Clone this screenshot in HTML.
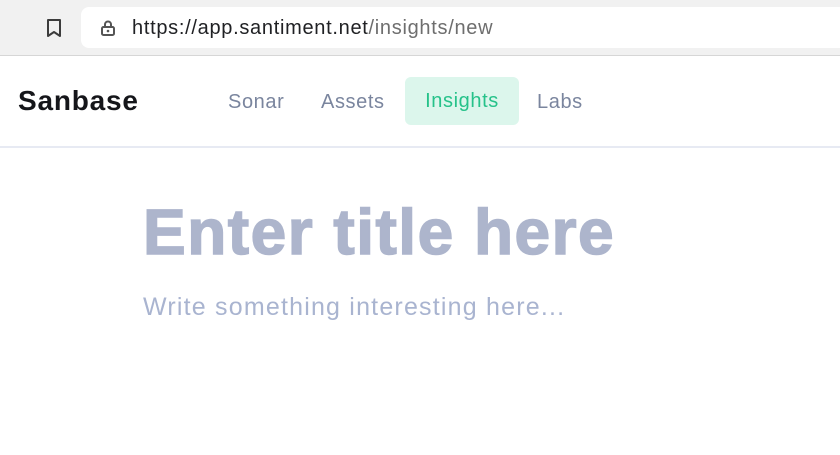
<!DOCTYPE html>
<html><head><style>
body{margin:0;width:840px;height:455px;overflow:hidden;background:#fff;font-family:"Liberation Sans",sans-serif;position:relative}
.bar{position:absolute;left:0;top:0;width:840px;height:55px;background:#f1f1f1;border-bottom:1px solid #d6d6d6}
.url{position:absolute;left:81px;top:7px;width:780px;height:41px;background:#fff;border-radius:8px}
.urltxt{position:absolute;left:132px;top:17px;font-size:20px;color:#202124;letter-spacing:0.7px}
.urltxt span{color:#6e6e6e}
.nav{position:absolute;left:0;top:56px;width:840px;height:90px;border-bottom:2px solid #e7eaf3}
.logo{position:absolute;left:18px;top:29px;font-size:28px;font-weight:bold;color:#15161a;letter-spacing:0.8px}
.item{position:absolute;top:35px;font-size:20px;color:#7a859e;letter-spacing:0.6px}
.ins{position:absolute;left:405px;top:21px;width:114px;height:48px;background:#dcf6ec;border-radius:6px;color:#26c28a;font-size:20px;text-align:center;line-height:48px;letter-spacing:0.6px}
h1{position:absolute;left:143px;top:195px;margin:0;font-size:64px;font-weight:bold;color:#adb5cc;letter-spacing:1.5px;white-space:nowrap;line-height:74px;-webkit-text-stroke:1.5px #adb5cc}
.sub{position:absolute;left:143px;top:293px;font-size:25px;color:#a9b4d0;letter-spacing:1.2px;white-space:nowrap}
</style></head><body>
<div class="bar"><div class="url"></div>
<svg style="position:absolute;left:46px;top:19px" width="16" height="18" viewBox="0 0 16 18"><path d="M2 1h12v16l-6-4-6 4z" fill="none" stroke="#3c3c3c" stroke-width="2" stroke-linejoin="round"/></svg>
<svg style="position:absolute;left:101px;top:20px" width="14" height="16" viewBox="0 0 14 16"><path d="M4 7V4.5a3 3 0 0 1 6 0V7" fill="none" stroke="#555" stroke-width="2"/><rect x="1" y="7" width="12" height="8" rx="1.5" fill="none" stroke="#555" stroke-width="2"/><circle cx="7" cy="11" r="1.3" fill="#555"/></svg>
<div class="urltxt">https://app.santiment.net<span>/insights/new</span></div></div>
<div class="nav">
<div class="logo">Sanbase</div>
<div class="item" style="left:228px">Sonar</div>
<div class="item" style="left:321px">Assets</div>
<div class="ins">Insights</div>
<div class="item" style="left:537px">Labs</div>
</div>
<h1>Enter title here</h1>
<div class="sub">Write something interesting here...</div>
</body></html>
